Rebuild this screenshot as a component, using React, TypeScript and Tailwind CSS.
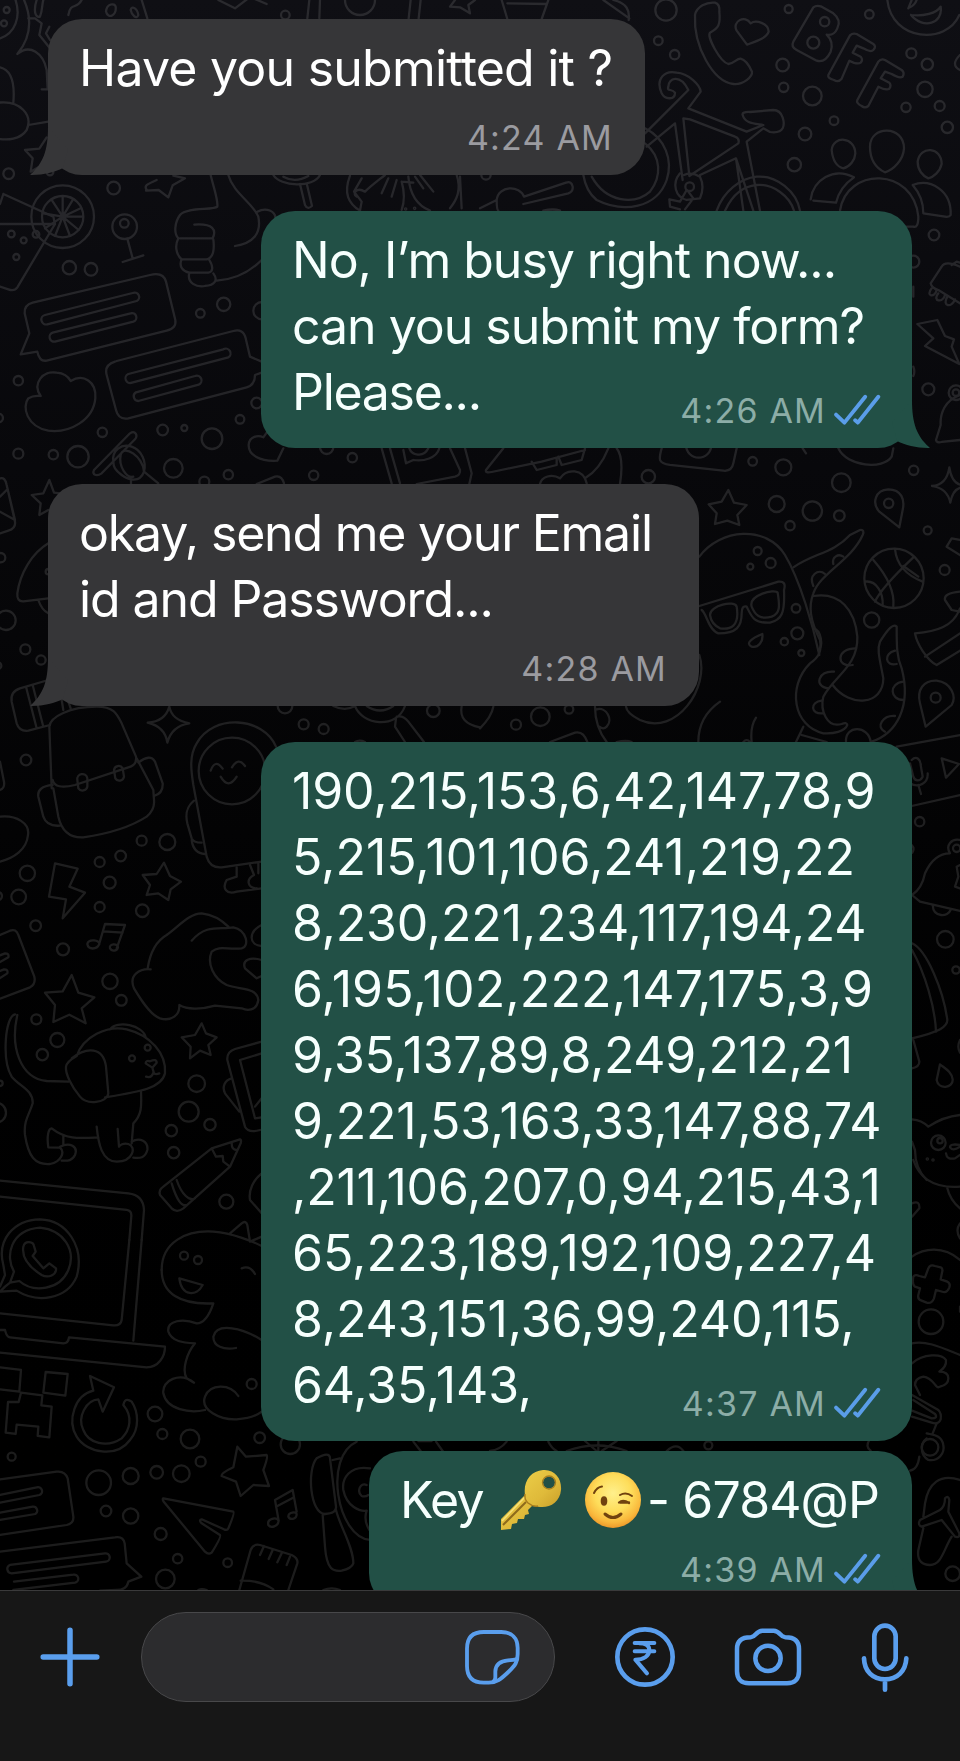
import type { ReactNode } from "react";

type Dot = [number, number, number];

/* ---------- wallpaper ---------- */

function Tile({ x, y, dots, paths }: { x: number; y: number; dots: Dot[]; paths: string[] }) {
  return (
    <g transform={`translate(${x} ${y}) scale(0.33333)`}>
      {dots.map(([cx, cy, r], i) => (
        <circle key={i} cx={cx} cy={cy} r={r} />
      ))}
      {paths.map((d, i) => (
        <path key={i} d={d} />
      ))}
    </g>
  );
}

const topLeftDots: Dot[] = [
  [20, 30, 9], [12, 70, 9], [856, 45, 13], [26, 521, 16], [341, 564, 19], [188, 650, 94], [188, 650, 62],
  [374, 680, 37], [373, 670, 13], [34, 702, 10], [71, 721, 9], [108, 703, 10], [49, 771, 9],
  [208, 803, 20], [273, 808, 19], [601, 940, 13], [671, 913, 20], [786, 932, 26], [55, 1142, 14], [-4, 1254, 13],
  [307, 1297, 14], [488, 1290, 16], [553, 1284, 9], [636, 1316, 31], [720, 1258, 13], [770, 1209, 16],
  [55, 1361, 15], [160, 1364, 14], [234, 1370, 32], [520, 1405, 28], [685, 1424, 14], [941, 1426, 14],
  [1057, 1373, 14], [980, 1342, 20], [1080, 0, 45], [1217, 627, 2], [1244, 625, 2], [613, 1445, 15], [150, 516, 10],
];
const topLeftPaths = [
  "M45 -5C65 50 45 100 0 115M70 -5C95 50 95 110 52 162C90 130 130 160 140 210L143 268H125",
  "M110 0C100 30 105 55 120 50C128 30 126 10 130 0M85 55H105L125 70L118 105L150 145M148 80L138 100L150 120",
  "M205 45C212 5 230 30 245 0M318 35C320 10 345 8 347 20C350 45 325 60 318 35M392 30C395 15 412 25 415 45C410 60 395 45 392 30M425 0L442 55",
  "M0 202C35 210 45 250 40 308M-5 308C60 300 100 345 80 390C60 420 20 420 0 417M85 375L145 365",
  "M140 412L118 446L75 450L98 475L92 515L115 502",
  "M655 0L705 25L745 -5M760 -5L800 12M928 0L922 55M960 0L958 55M1232 0L1226 55M1262 0L1256 55",
  "M1365 0L1350 20L1380 22L1410 40L1405 15L1425 0",
  "M440 570C430 555 445 552 470 540M438 572L476 570L505 592L518 556L555 535L520 527",
  "M188 650V590M188 650L218 600M188 650L242 625M188 650H248M188 650L236 690M188 650L210 708M188 650L165 708M188 650L135 685M188 650L130 640M188 650L155 600",
  "M10 582L160 650L165 672H0M165 672L52 862Q43 875 25 868L0 860M10 582L0 612",
  "M382 716L398 775M368 786L430 766",
  "M632 525C640 560 655 600 652 620C640 632 560 620 540 645C525 665 520 700 535 715C520 745 535 770 545 778C535 800 550 815 568 818C560 850 590 862 615 858C645 855 655 840 640 820M583 674C640 670 650 690 638 715H540M640 718C645 760 635 775 620 778H548M628 780C640 800 640 815 625 818L570 818M650 842C710 838 750 815 785 780M685 525C700 580 760 610 775 650C785 700 760 730 705 738M772 635C800 620 825 635 826 652",
  "M820 525C840 560 940 565 960 525M900 552L915 615Q922 630 936 618L920 550M850 530Q885 550 925 528",
  "M1050 527C1030 580 1045 610 1080 632M1085 535L1062 575L1085 605L1080 632M1095 575C1070 560 1055 580 1070 590M1155 525C1130 545 1110 560 1095 575M1165 535L1145 580M1190 540L1175 590M1205 545C1215 580 1212 610 1205 630M1205 545L1240 548M1225 530C1230 590 1260 620 1290 632M1245 530L1270 565M1260 525L1300 575M1370 525C1385 570 1370 600 1350 625M1380 530L1385 625",
  "M98 908L450 825Q490 815 498 845L526 960Q530 985 500 992L140 1082Q118 1085 112 1055L62 1063L88 1000L74 940Q72 915 98 908Z",
  "M135 945L398 879A12 12 0 0 1 410 903L142 973A14 14 0 0 1 135 945ZM158 998L392 940A12 12 0 0 1 400 965L165 1025A14 14 0 0 1 158 998Z",
  "M350 1083L700 993Q730 985 737 1015L750 1070L785 1085M345 1085Q312 1095 320 1125L348 1230Q355 1260 385 1255L740 1162Q765 1155 765 1125L785 1118",
  "M385 1122L670 1048A12 12 0 0 1 685 1072L396 1148A14 14 0 0 1 385 1122ZM408 1177L585 1128A12 12 0 0 1 596 1154L415 1203A14 14 0 0 1 408 1177Z",
  "M122 1188C95 1150 130 1110 170 1118C195 1120 205 1130 212 1143C250 1120 290 1145 286 1195C280 1260 210 1300 145 1292C80 1280 65 1220 85 1195Q100 1185 122 1188Z",
  "M850 1345L832 1382C780 1385 745 1365 746 1335C748 1308 775 1305 790 1312L800 1298",
  "M282 1410L390 1300C405 1290 415 1305 405 1318L305 1420C290 1430 275 1425 282 1410M340 1385C335 1350 365 1330 395 1340C425 1350 440 1385 432 1415C420 1450 385 1440 365 1425C345 1410 340 1400 340 1385M362 1365C370 1330 430 1370 432 1415M362 1365C355 1400 380 1435 400 1430M432 1415L475 1450M393 1440V1455",
  "M1145 1345L1175 1450M1170 1345L1200 1450M1210 1350L1218 1390L1240 1380C1270 1385 1310 1375 1318 1345M1228 1345C1235 1365 1270 1375 1285 1345M1350 1345L1380 1410Q1382 1425 1365 1430L1250 1452M1395 1345L1415 1420L1408 1452",
  "M770 1452L825 1430Q845 1425 852 1450",
];

const topRightDots: Dot[] = [
  [558, 30, 32], [535, 122, 13], [584, 164, 14], [908, 195, 19], [911, 262, 14], [997, 288, 28], [926, 27, 12],
  [1168, 43, 13], [1294, 160, 15], [1342, 193, 17], [1335, 268, 23], [1278, 322, 14], [1379, 318, 15],
  [1062, 362, 13], [975, 402, 19], [1402, 382, 17], [943, 494, 20], [1034, 65, 14], [1000, 128, 18], [629, 560, 13],
  [1362, 705, 16], [1345, 1168, 18], [1428, 1178, 10], [1428, 1178, 22], [505, 1430, 20], [818, 1384, 13],
  [910, 1402, 24], [1301, 1411, 14], [1300, 785, 18], [656, 1335, 38], [18, 525, 14],
];
const topRightPaths = [
  "M65 0L82 57M82 10L200 12M205 0L185 57M370 0L448 55M400 0C440 10 450 30 446 60",
  "M645 45C650 20 680 5 705 8Q720 12 718 35C722 75 715 85 690 98C680 110 720 185 745 192C765 190 770 175 782 176Q800 180 816 215C818 230 790 255 760 252C700 245 640 140 645 45Z",
  "M801 134L770 92C755 65 795 42 812 70C828 58 865 70 866 95C860 115 825 125 801 134Z",
  "M940 125L1000 22Q1010 14 1025 20L1060 40Q1085 60 1072 85Q1062 108 1040 104Q1062 125 1052 155Q1035 190 1010 182L950 150Q932 140 940 125Z",
  "M1045 225L1110 106Q1118 98 1130 102L1180 132Q1190 140 1180 150Q1172 158 1150 145L1130 137L1118 158L1142 170Q1150 180 1142 188Q1132 195 1108 182L1085 236Q1075 248 1062 240Q1042 235 1045 225Z",
  "M1132 300L1195 185Q1203 175 1215 180L1265 210Q1275 218 1268 230Q1258 236 1235 222L1215 215L1202 235L1228 248Q1235 256 1228 266Q1218 272 1195 260L1165 318Q1155 326 1145 318Q1128 310 1132 300Z",
  "M1222 0C1235 125 1400 135 1438 45M1293 45C1330 50 1370 40 1382 20C1390 70 1330 90 1293 45M1295 0L1285 25M1310 0Q1305 15 1290 22M1440 165C1420 185 1420 200 1440 210",
  "M495 400L585 310L625 270C600 220 565 235 565 260C560 275 575 265 585 278C585 300 555 300 545 280C525 235 555 210 590 218C625 220 660 255 662 275L625 325M625 325L800 395L850 375C820 370 795 370 788 345Q785 335 810 336L880 330C910 330 915 370 908 385Q900 400 870 396L850 385L800 425L840 632M500 440L585 370L608 540M610 355L628 528L775 430Q780 415 765 410L630 358ZM660 525L768 475L790 632M768 475L820 632",
  "M495 385C555 415 580 480 560 540C530 625 430 640 350 600C325 580 315 555 310 525M495 430C545 470 545 530 510 575C465 615 380 610 335 530",
  "M710 632C730 575 780 535 830 530C890 525 950 575 960 632M735 632C760 580 790 560 830 555C880 550 930 590 942 632",
  "M600 520C575 550 585 590 620 600L660 595Q675 560 660 530Q635 515 612 525M620 570L600 605L568 598L570 620L600 628M625 575L640 595L615 628",
  "M0 625L50 600C55 555 120 555 132 590L258 548Q275 542 278 560Q280 575 265 580L130 612M50 600Q50 632 55 632M190 632Q220 625 240 632",
  "M1055 450C1060 405 1125 410 1126 460C1125 480 1110 500 1090 505C1070 500 1058 480 1055 450ZM1170 440C1170 375 1272 375 1272 445C1270 480 1240 510 1215 517C1190 505 1170 480 1170 440ZM1313 485C1320 435 1385 440 1385 492C1380 515 1360 532 1345 535C1328 528 1313 510 1313 485Z",
  "M992 598C1000 540 1060 500 1122 532C1095 550 1075 580 1068 608L1000 602M1080 632C1100 500 1300 500 1315 650Q1315 685 1300 680H1280M1298 555C1350 535 1415 570 1412 645Q1408 652 1395 650L1330 640C1330 610 1320 580 1298 555",
  "M1440 800Q1395 780 1385 800L1352 850Q1355 865 1375 870L1440 910M1415 795L1430 785L1440 788M1355 865C1335 890 1365 895 1370 870M1375 880C1355 905 1390 910 1395 885M1402 890C1385 920 1415 925 1425 898M1300 860V890",
  "M1312 972L1372 960L1395 1008L1422 1018L1415 1040L1438 1092L1335 1038L1360 1015L1312 972Z",
  "M1440 1185C1395 1200 1380 1240 1382 1275L1368 1320Q1370 1330 1385 1326L1440 1320M1300 1100Q1306 1115 1300 1128",
  "M70 1345L18 1410Q15 1420 35 1416L185 1385L315 1350M155 1385L170 1410L230 1395V1375M235 1370L245 1395L305 1380L315 1345M410 1345C430 1370 425 1420 420 1452M180 1452C185 1430 215 1420 240 1435C260 1405 310 1405 320 1450M385 1345C365 1395 340 1420 315 1435",
  "M545 1345C535 1380 535 1390 570 1395L730 1412Q755 1415 760 1390L770 1345M1075 1345C1100 1400 1210 1410 1235 1370L1240 1345M968 1345L978 1360",
];

const midLeftDots: Dot[] = [
  [2, 293, 14], [18, 481, 29], [76, 568, 15], [123, 600, 14], [-6, 617, 10], [78, 900, 16], [145, 335, 8],
  [425, 1142, 15], [502, 1146, 24], [362, 1188, 16], [299, 1206, 15], [82, 1240, 23], [56, 1311, 22], [-6, 1308, 12],
  [329, 1268, 18], [299, 1341, 15], [427, 1352, 19], [107, 1397, 16], [696, 933, 100], [911, 793, 15], [971, 807, 15],
  [855, 738, 22], [1300, 752, 19],
];
const midLeftPaths = [
  "M0 55Q15 50 20 75L45 185Q48 205 25 212L0 220M20 90L0 110M20 75L45 180L0 155",
  "M180 100L162 98L148 60L130 100L95 105L122 130L118 165L145 150",
  "M145 250C95 280 60 340 52 400Q50 425 70 424L145 415M115 420Q125 450 145 460",
  "M145 660L60 685Q30 695 35 725L50 790Q58 815 85 812L150 795M78 680L110 805M98 675L130 800M185 720L190 750M205 725L212 745",
  "M155 985L148 800C150 770 210 740 290 740C340 740 350 760 365 790L408 890Q412 915 385 922L225 975Q165 990 158 960M160 985L175 1070Q190 1135 250 1132Q370 1115 440 1070Q465 1050 462 1020L460 990L410 895",
  "M158 975Q110 980 115 1010L130 1070Q140 1100 180 1097M415 908Q450 880 465 905L488 970Q490 1000 462 1008",
  "M232 960A15 15 0 0 1 262 955L262 980A15 15 0 0 1 235 985ZM342 930A14 14 0 0 1 368 925L372 950A14 14 0 0 1 346 955Z",
  "M443 788Q495 785 508 740Q515 780 568 790Q515 798 502 848Q495 800 443 788Z",
  "M828 860C790 770 640 760 590 850C565 890 575 940 580 975L620 1190Q630 1225 665 1222L785 1205",
  "M582 1022C560 1040 555 1060 562 1090L575 1135Q580 1148 605 1148M575 1140Q580 1180 615 1182M632 932Q645 895 668 926M696 922Q715 890 735 918M662 950Q685 990 710 950",
  "M710 1222V1250L680 1260C665 1285 680 1305 710 1295L785 1285M750 1215L762 1245C735 1260 745 1285 770 1285M775 1210V1240",
  "M165 1210L233 1226L208 1280L255 1298L188 1375L198 1318L147 1310Z",
  "M492 1208L510 1248L543 1265L512 1288L505 1320L475 1300L440 1305L450 1275L428 1245L470 1242Z",
  "M0 905L12 965Q15 985 0 990M0 1070C50 1065 90 1090 84 1125C80 1170 40 1195 0 1205",
  "M1000 738Q1035 755 1065 738C1085 795 1190 810 1215 738M1100 738Q1140 765 1180 738M1190 770Q1210 765 1225 785L1272 846M1188 775L1185 800L1215 846M1385 738Q1375 790 1440 802M1065 846Q1078 838 1095 846",
];

const midRightDots: Dot[] = [
  [890, 132, 24], [997, 153, 29], [1084, 68, 28], [1078, 167, 16], [930, 197, 14], [833, 273, 12], [872, 309, 15],
  [811, 320, 9], [1226, 130, 14], [1343, 211, 12], [1394, 330, 15], [1242, 355, 89], [948, 445, 13], [952, 520, 18],
  [913, 545, 11], [964, 579, 9], [1175, 480, 23], [1367, 713, 15], [181, 770, 28], [108, 794, 15], [267, 748, 13],
];
const midRightPaths = [
  "M745 90L762 128L800 135L772 165L778 195L742 182L705 192L710 160L686 133L725 125Z",
  "M1258 202L1198 155C1175 130 1185 90 1225 88C1265 88 1275 120 1268 150Z",
  "M1337 800L1320 730C1310 690 1330 660 1370 662C1415 668 1430 710 1415 735Z",
  "M1356 78Q1400 75 1408 22Q1415 70 1445 75M1445 82Q1418 88 1411 128Q1402 85 1356 78",
  "M1180 300C1215 340 1245 390 1240 440M1245 267C1250 320 1290 350 1328 365M1300 292C1260 330 1200 390 1185 425M1155 365C1190 360 1210 400 1208 435M1270 318L1315 350",
  "M658 290C720 205 860 195 915 285C960 360 1000 500 1018 585M658 438L895 365Q920 362 912 390C915 460 905 480 870 488C820 490 815 470 800 440Q785 435 785 460C785 500 770 520 715 520C685 510 680 460 665 450M690 465C690 435 765 420 770 440C780 500 750 510 720 505C700 495 692 480 690 465M815 440C805 405 885 385 893 398C900 440 900 460 875 470C840 480 825 465 815 440Z",
  "M847 522C850 545 835 565 815 560C795 550 815 535 847 522Z",
  "M940 322C1000 280 1060 280 1110 225L1140 210Q1155 208 1148 225C1115 300 1020 340 1000 400C985 440 990 480 1020 540C1025 570 1020 590 990 610C920 680 940 800 1030 820C1060 822 1095 815 1102 795Q1100 785 1085 792C1040 805 1020 750 1030 710C1060 650 1135 620 1132 530C1125 450 1080 395 1000 408",
  "M1058 675C1110 745 1210 735 1210 655C1200 600 1190 570 1200 545C1225 505 1240 490 1250 500C1250 560 1250 590 1265 625C1295 740 1250 820 1175 845",
  "M1000 378C985 345 1015 325 1035 342M1060 312C1055 290 1075 280 1090 290M1000 505C1025 510 1030 560 1015 570M1118 615C1070 625 1065 565 1128 565M1045 685C1000 680 1015 630 1062 635M1030 760C990 765 990 725 1025 722M1250 612C1215 620 1210 580 1245 572M1270 720C1230 720 1225 670 1270 665M1215 815C1185 800 1210 765 1245 768M1098 845C1095 795 1165 795 1172 845",
  "M658 585C690 680 590 830 480 780Q440 760 438 740M345 740Q345 800 380 846M350 748C380 740 400 780 380 800Q370 810 358 800M655 846Q655 770 720 725M815 846Q810 800 828 773M790 846Q800 835 810 846M970 800L948 846M965 825L1040 846",
  "M1440 240L1415 235L1400 260L1440 285M1440 395Q1390 400 1395 420L1415 450L1440 455M1440 445C1420 500 1370 515 1305 520C1310 550 1340 600 1370 615L1440 572M1335 590L1440 520",
  "M0 805Q35 770 40 740M210 846L285 818Q310 812 322 846M410 846Q440 840 455 846",
];

const lowLeftDots: Dot[] = [
  [189, 148, 18], [330, 244, 23], [364, 301, 16], [109, 358, 15], [172, 420, 21], [127, 464, 17], [396, 475, 9],
  [443, 443, 9], [590, 551, 25], [566, 635, 30], [630, 674, 17], [514, 692, 17], [521, 758, 17], [679, 905, 21],
  [0, 550, 8], [-12, 638, 30],
];
const lowLeftPaths = [
  "M0 105L30 92Q48 85 55 105L103 230Q108 252 90 262L0 296M0 166L15 160Q28 160 25 172L0 186M0 213L12 208Q25 208 22 220L0 234",
  "M262 132C265 115 300 120 298 132C290 150 265 150 262 132ZM298 130L315 72L375 75L350 145M310 94L368 98M330 145C325 130 355 130 354 142C350 155 335 155 330 145Z",
  "M215 225L235 278L283 292L245 325L257 370L208 344L160 366L165 315L135 278L188 274Z",
  "M605 370L618 400L650 412L625 435L632 465L600 452L570 475L572 440L545 412L585 405Z",
  "M575 122C620 70 660 90 700 82C740 90 750 140 725 145C680 150 660 135 635 155C620 190 640 235 680 255C720 270 770 260 775 300C770 335 740 332 725 325L645 317C600 330 560 328 538 315C540 345 515 365 480 355C450 345 420 295 402 265C385 225 420 205 452 208M443 205C450 160 465 125 500 105C540 75 570 40 605 40Q650 45 685 80",
  "M785 75C745 95 745 135 785 138M785 180C750 170 725 180 735 205L770 235L785 228",
  "M45 343C15 350 5 480 35 530C60 560 100 570 98 610C90 640 70 660 75 705C85 770 105 795 150 792C185 785 195 755 180 743L145 742C140 710 145 685 155 685C200 720 240 715 295 712M52 345C30 440 60 535 140 543L205 545M290 680C295 730 305 785 350 785C400 785 410 740 385 732C370 728 360 735 357 740L353 687M423 575C425 620 425 645 400 670L395 730M190 708V735M180 740C210 725 235 740 225 765C215 785 200 782 185 782M395 725C420 710 445 725 442 750C435 775 420 775 400 773",
  "M230 468C250 410 320 375 380 388C450 405 500 460 495 520C485 565 420 575 315 592M215 475C260 440 310 440 318 500L325 580C320 610 260 615 240 590C215 560 195 520 198 500Q200 485 230 468M330 388C350 360 430 375 437 412M437 490Q437 480 450 484Q470 475 470 488L457 503ZM457 503L462 520M438 530Q455 535 460 518Q465 525 478 520",
  "M785 425L705 447Q680 455 682 480L735 680Q745 700 780 690M785 460L720 480L765 655L785 652M695 535C675 540 665 560 675 580L718 635M785 595L765 620",
  "M480 885Q475 870 490 860L635 745L720 718Q725 720 722 730L690 800L550 925Q530 940 515 925ZM635 745L648 770L668 768L670 785L690 800M695 730Q695 750 710 750M515 850C530 900 545 920 560 915M530 840C545 885 570 905 585 895",
  "M785 820C760 840 745 870 750 900L785 940M690 1000L725 970Q738 960 742 975L750 1025L785 1010M485 1110C485 1025 560 990 640 995C700 1000 760 1025 785 1038",
  "M0 842L385 880Q430 885 432 930L425 1020M0 890L380 930Q395 932 394 948L388 1020",
];

const bottomLeftDots: Dot[] = [
  [465, 522, 22], [487, 582, 15], [570, 597, 28], [602, 665, 15], [544, 701, 25], [470, 697, 19], [392, 708, 24],
  [296, 728, 37], [318, 813, 16], [392, 828, 23], [482, 882, 18], [533, 956, 14], [496, 1017, 28], [683, 968, 13],
  [779, 593, 16], [871, 613, 29], [755, 432, 15], [35, 650, 12], [552, 47, 12], [594, 60, 12],
];
const bottomLeftPaths = [
  "M0 155L15 140L30 128M0 155L50 152C110 190 200 180 230 110C255 20 200 -60 120 -62C40 -60 -10 0 10 75L15 105L0 140M30 128L42 95C15 50 30 -30 120 -37C190 -30 230 30 205 90C180 150 100 160 58 123L30 128",
  "M70 20C75 0 100 5 102 18L107 35L98 48L130 85L148 70L168 85C170 105 145 115 125 105C85 80 65 50 70 20Z",
  "M425 0L400 302M388 0L365 240Q362 258 340 256L0 220M0 270H15Q20 292 30 292L190 310Q205 310 207 292L495 320C495 350 475 382 440 382L0 338",
  "M0 382L63 390L58 455L0 448M137 396L203 402L196 467L130 458ZM63 458L127 466L124 496L155 500L148 592L113 588L115 560L50 554L47 582L17 578L24 486H56Z",
  "M342 442L270 408L280 452C225 465 200 540 230 590C260 640 350 655 390 600C420 565 415 515 395 485Q375 470 370 495C400 530 390 570 365 595C320 625 265 610 250 570C230 530 260 480 295 478L308 515Z",
  "M485 90C485 160 540 195 640 190C630 220 615 250 590 250C550 235 500 240 505 275C515 305 550 308 585 310C560 340 545 390 560 415L582 428C540 395 485 420 490 460C500 510 570 520 615 510M538 115L608 135C590 170 545 170 538 115ZM725 85Q750 75 765 102M785 300C730 265 650 245 640 290C640 320 670 330 708 324M715 468C690 430 630 430 615 470C600 510 660 540 710 538Q760 535 785 515",
  "M712 620L738 650L800 645Q805 650 790 690L807 738L760 735L722 768L708 725L665 708Q662 700 700 682Z",
  "M490 775L700 815Q705 818 685 865Q682 872 672 868L605 838Q595 840 605 850L660 885Q665 890 635 938Q625 945 615 935L495 790Q485 778 490 775Z",
  "M805 855C800 835 830 830 836 842C835 860 812 865 805 855ZM836 842L825 780L878 750L890 815M828 800L882 772M865 830C865 815 888 815 890 822C890 840 868 840 865 830Z",
  "M0 718L170 695Q195 692 203 715L220 830Q222 850 200 855L0 885M0 765L110 742A12 12 0 0 1 118 765L0 788M0 818L98 800A12 12 0 0 1 106 822L0 840",
  "M0 935L345 892Q370 888 374 910L380 970L424 1010L385 1025Q380 1050 350 1050L300 1052M30 975L315 940A11 11 0 0 1 318 965L35 1000A13 13 0 0 1 30 975ZM42 1025L220 1004A11 11 0 0 1 225 1028L40 1050M0 1035",
  "M718 1050L752 930Q760 910 780 915L875 945Q895 955 892 970L865 1050M722 1022Q780 1020 820 1048M792 918L780 945M818 930L806 957M845 940L832 967M870 950L860 975",
  "M975 822C930 820 920 690 950 655C975 640 990 640 990 655L1008 800Q1010 820 975 822L968 825L975 920C980 990 1000 995 1025 992Q1055 985 1060 970C1060 920 1020 860 1008 810M1110 900C1010 890 970 650 1070 605M1110 685C1050 675 1025 715 1030 750C1040 800 1080 815 1100 812Q1090 840 1108 870M1020 655L998 660M1100 735C1080 725 1070 755 1085 768Q1095 772 1105 765",
  "M595 1050Q605 1045 620 1050M970 1050Q995 1040 1020 1050",
];

const rightUpperDots: Dot[] = [
  [179, 275, 14], [256, 628, 25], [288, 720, 11], [290, 355, 11], [235, 1238, 22], [240, 1232, 8], [202, 1287, 2], [219, 1290, 2],
];
const rightUpperPaths = [
  "M110 50L300 15M155 228L300 195M155 90C170 75 182 90 182 105L188 140C180 155 165 155 160 140L150 100M150 160C175 175 205 160 203 130M175 165L183 192M245 85L297 102L258 143Z",
  "M155 345Q165 355 157 368M156 495C180 480 190 455 195 430C215 385 240 370 270 370C255 345 275 325 300 330M156 495L180 515L300 543M218 525C220 565 265 560 272 540M300 405L290 410L295 440L285 470L300 475",
  "M156 640C200 660 250 780 262 870C262 890 240 905 156 925M156 660C195 730 225 830 228 905M160 930L178 995Q178 1010 156 1015",
  "M240 1003L230 1050C235 1080 280 1075 278 1048C275 1025 255 1015 240 1003ZM156 1168Q185 1170 205 1190Q250 1160 300 1155M156 1235L165 1260C165 1300 180 1330 200 1350M300 1245Q270 1240 270 1252Q280 1265 300 1250M258 1270Q260 1290 285 1285L300 1275M300 930Q290 950 300 968",
];

const rightLowerDots: Dot[] = [[213, 485, 37], [210, 862, 25], [278, 1241, 22]];
const rightLowerPaths = [
  "M160 0C180 60 230 85 300 80M262 85Q270 120 300 145M156 130Q180 120 178 145L156 170M300 190Q285 210 300 235",
  "M156 290C190 265 250 255 300 300M156 550C200 540 250 565 300 585",
  "M205 325Q210 312 225 318L242 322Q250 326 246 338L242 358L262 365Q272 370 268 382Q262 398 250 396L228 390L222 415Q215 432 200 428L185 422Q172 418 175 405L180 385L165 380Q156 375 160 350Q165 342 178 348L195 352Z",
  "M156 610C190 580 245 580 258 600Q260 620 238 635Q265 635 265 655Q265 675 240 680C225 690 225 655 190 650Q165 655 165 675L180 705M156 705L235 750Q245 760 242 778Q235 795 215 788L156 770M160 720L225 762Q235 775 215 775L156 752",
  "M200 835C180 850 180 885 205 900C235 905 255 880 250 855C245 825 220 825 200 820M230 790L218 820M178 890C175 915 165 930 150 932M28 840Q15 860 32 872",
  "M300 960C240 940 205 970 195 1030L190 1070M190 1105L175 1170C170 1205 190 1215 210 1215C245 1215 250 1170 275 1130M180 1080L240 1050Q255 1040 255 1015Q265 1005 268 1020L265 1055L298 1120Q300 1135 285 1130L245 1080L185 1100Q172 1095 180 1080Z",
  "M300 440V455",
];

const gapDots: Dot[] = [[925, 16, 12]];
const gapPaths = [
  "M40 5L62 33M108 5L128 33M55 3H95M320 5Q300 30 270 33M445 5Q455 25 470 33M500 33Q590 0 680 33M555 3L590 33M595 0L595 33M650 3L605 33M800 33Q830 5 850 33",
];

function Wallpaper() {
  return (
    <svg
      className="absolute inset-0 h-full w-full opacity-11"
      viewBox="0 0 960 1590"
      fill="none"
      stroke="#ffffff"
      strokeWidth="6.800"
      strokeLinecap="round"
      strokeLinejoin="round"
      aria-hidden="true"
    >
      <Tile x={0} y={0} dots={topLeftDots} paths={topLeftPaths} />
      <Tile x={480} y={0} dots={topRightDots} paths={topRightPaths} />
      <Tile x={0} y={460} dots={midLeftDots} paths={midLeftPaths} />
      <Tile x={480} y={460} dots={midRightDots} paths={midRightPaths} />
      <Tile x={0} y={900} dots={lowLeftDots} paths={lowLeftPaths} />
      <Tile x={0} y={1240} dots={bottomLeftDots} paths={bottomLeftPaths} />
      <Tile x={860} y={730} dots={rightUpperDots} paths={rightUpperPaths} />
      <Tile x={860} y={1160} dots={rightLowerDots} paths={rightLowerPaths} />
      <Tile x={400} y={1440} dots={gapDots} paths={gapPaths} />
    </svg>
  );
}

/* ---------- messages ---------- */

function Ticks() {
  return (
    <svg className="-mt-0.5 h-8 w-12" viewBox="1060 1180 143 95" fill="none" stroke="#5a9de9" strokeWidth="11.500" strokeLinecap="round" strokeLinejoin="round">
      <path d="M1069 1241L1094 1265L1156 1188" />
      <path d="M1126 1258L1134 1265L1195 1188" />
    </svg>
  );
}

function Received({ time, className, children }: { time: string; className: string; children: ReactNode }) {
  return (
    <div className={`relative self-start rounded-[34px] bg-[#363638] pt-4 pb-[17px] pl-[31px] text-white ${className}`}>
      <svg className="absolute bottom-0 -left-[18px] h-14 w-10" viewBox="0 0 40 56" fill="#363638">
        <path d="M18 8C18 32 13 44 1 55C0 56 0 56 2 56C14 56 25 53 33 49L38 30L18 8Z" />
      </svg>
      <div className="relative text-[50px] leading-[66px] whitespace-nowrap">{children}</div>
      <div className="relative mt-4 pr-8 text-right text-[34px] leading-[41px] tracking-[1.2px] text-[#9b9ba0]">{time}</div>
    </div>
  );
}

function Sent({
  time,
  className,
  inline = false,
  tail = false,
  children,
}: {
  time: string;
  className: string;
  inline?: boolean;
  tail?: boolean;
  children: ReactNode;
}) {
  return (
    <div className={`relative self-end rounded-[34px] bg-[#225046] pt-4 pb-[17px] pl-[31px] text-[#f6fffd] ${className}`}>
      {tail && (
        <svg className="absolute -right-[18px] bottom-0 h-14 w-10" viewBox="0 0 40 56" fill="#225046">
          <path d="M22 8C22 32 27 44 39 55C40 56 40 56 38 56C26 56 15 53 7 49L2 30L22 8Z" />
        </svg>
      )}
      <div className="relative text-[50px] leading-[66px] whitespace-nowrap">{children}</div>
      <div className={`relative flex h-[41px] items-center justify-end gap-[7px] pr-[31px] ${inline ? "-mt-[35px]" : "mt-4"}`}>
        <span className="text-[34px] leading-[41px] tracking-[1.2px] text-[#8cada7]">{time}</span>
        <Ticks />
      </div>
    </div>
  );
}

function KeyEmoji() {
  return (
    <svg className="ml-[17px] h-[62px] w-[62px] shrink-0" viewBox="0 0 62 62" role="img" aria-label="key">
      <defs>
        <linearGradient id="gold" x1="0" y1="0" x2="1" y2="1">
          <stop offset="0" stopColor="#f3d84f" />
          <stop offset="0.55" stopColor="#dfba3a" />
          <stop offset="1" stopColor="#b98a1d" />
        </linearGradient>
      </defs>
      <path
        fillRule="evenodd"
        fill="url(#gold)"
        d="M43 1C55 0 62 10 61 21C60 33 50 39 40 38L32 37L28 41L29 45L25 46L24 50L18 50L17 54L12 55L11 60L1 61V50L25 26C23 12 31 2 43 1ZM49 7.500A6 6 0 1 0 49 19.500A6 6 0 1 0 49 7.500Z"
      />
      <path d="M3 56L26 33" stroke="#8d6a1c" strokeWidth="2" />
      <path d="M2 52L25 28" stroke="#f8e27a" strokeWidth="1.500" />
      <path d="M25 25Q24 30 28 34Q33 38 38 37" stroke="#a67b1d" strokeWidth="1.500" fill="none" />
      <circle cx="49" cy="13.500" r="6.500" fill="none" stroke="#a67f20" strokeWidth="1.300" />
    </svg>
  );
}

function WinkEmoji() {
  return (
    <svg className="ml-[23px] h-[58px] w-14 shrink-0" viewBox="0 0 56 58" role="img" aria-label="winking face">
      <defs>
        <radialGradient id="face" cx="0.5" cy="0.38" r="0.65">
          <stop offset="0" stopColor="#fff08c" />
          <stop offset="0.5" stopColor="#fedd5a" />
          <stop offset="0.8" stopColor="#f9b83c" />
          <stop offset="1" stopColor="#ea8f24" />
        </radialGradient>
      </defs>
      <circle cx="28" cy="29" r="28" fill="url(#face)" />
      <ellipse cx="19" cy="30" rx="3.300" ry="4.800" fill="#70420f" />
      <g fill="none" stroke="#70420f" strokeLinecap="round">
        <path d="M9 22Q12 16 17 15.500" strokeWidth="2" />
        <path d="M35 24Q41 20.500 47 25" strokeWidth="2" />
        <path d="M34 31.500Q38 28 44 32M35 31.500H44" strokeWidth="2.300" />
        <path d="M20 43Q28 50 36 43" strokeWidth="3" />
      </g>
    </svg>
  );
}

/* ---------- composer ---------- */

function Composer() {
  return (
    <footer className="h-[171px] border-t border-[#3a3a3b] bg-[#171717] pt-[21px] text-[#5a9eed]">
      <div className="flex h-[90px] items-center pl-10">
        <svg className="h-[60px] w-[60px] shrink-0" viewBox="0 0 60 60" fill="none" stroke="currentColor" strokeWidth="5.500" strokeLinecap="round">
          <path d="M30 3.200V56.800M3.200 30H56.800" />
        </svg>
        <div className="ml-[41px] flex h-[90px] w-[414px] shrink-0 items-center justify-end rounded-full border border-[#48484a] bg-[#2c2c2e] pr-8">
          <svg className="h-[70px] w-[60px]" viewBox="66 126 180 210" fill="none" stroke="currentColor" strokeWidth="11.500" strokeLinejoin="round">
            <path d="M131 156H184C215 156 233 174 233 204V222C233 246 226 256 205 276C182 298 170 308 146 308H131C97 308 81 291 81 258V206C81 173 98 156 131 156Z" />
            <path d="M233 234C229 241 218 240 204 241C178 243 167 255 166 274V292C166 301 163 305 157 307" />
          </svg>
        </div>
        <svg className="ml-[60px] h-[70px] w-[60px] shrink-0" viewBox="525 126 180 210" fill="none" stroke="currentColor" strokeLinecap="round" strokeLinejoin="round">
          <circle cx="615" cy="231" r="83" strokeWidth="14" />
          <path d="M584 189H643M584 214H643M598 190C618 190 628 198 628 211C628 228 611 239 586 239L621 280" strokeWidth="12" />
        </svg>
        <svg className="ml-[59px] h-[70px] w-[68px] shrink-0" viewBox="882 126 204 210" fill="none" stroke="currentColor" strokeWidth="13.500" strokeLinejoin="round">
          <path d="M932 172C948 171 947 153 967 152H1001C1021 153 1020 171 1036 172C1063 172 1077 184 1077 207V274C1077 297 1064 310 1041 310H927C904 310 891 297 891 274V207C891 184 905 172 932 172Z" />
          <circle cx="984" cy="235" r="38" />
        </svg>
        <svg className="ml-[59px] h-[72px] w-12 shrink-0" viewBox="1263 125 144 216" fill="none" stroke="currentColor" strokeWidth="14" strokeLinecap="round">
          <rect x="1303" y="139" width="64" height="130" rx="32" />
          <path d="M1272 237C1273 275 1298 300 1335 300C1372 300 1397 275 1399 237M1335 300V331" />
        </svg>
      </div>
    </footer>
  );
}

export default function App() {
  return (
    <div className="flex h-[1761px] w-[960px] flex-col overflow-hidden bg-black font-['Inter',sans-serif]">
      <main className="relative h-[1590px] shrink-0 overflow-hidden bg-linear-to-b from-[#0f0f14] via-[#060608] via-40% to-black">
        <Wallpaper />
        <div className="relative flex flex-col pt-[19px] pr-12 pl-12">
          <Received time="4:24 AM" className="w-[597px]">
            <p className="tracking-[-0.77px]">Have you submitted it ?</p>
          </Received>
          <Sent time="4:26 AM" className="mt-9 w-[651px]" inline tail>
            <p className="tracking-[-1.02px]">No, I’m busy right now...</p>
            <p className="tracking-[-1.02px]">can you submit my form?</p>
            <p className="tracking-[-1.3px]">Please...</p>
          </Sent>
          <Received time="4:28 AM" className="mt-9 w-[651px]">
            <p className="tracking-[-1.2px]">okay, send me your Email</p>
            <p className="tracking-[-1.1px]">id and Password...</p>
          </Received>
          <Sent time="4:37 AM" className="mt-9 w-[651px]" inline>
            <p className="tracking-[-0.15px]">190,215,153,6,42,147,78,9</p>
            <p>5,215,101,106,241,219,22</p>
            <p className="tracking-[-0.2px]">8,230,221,234,117,194,24</p>
            <p className="tracking-[0.12px]">6,195,102,222,147,175,3,9</p>
            <p className="tracking-[-0.4px]">9,35,137,89,8,249,212,21</p>
            <p className="tracking-[-0.2px]">9,221,53,163,33,147,88,74</p>
            <p className="tracking-[-0.23px]">,211,106,207,0,94,215,43,1</p>
            <p>65,223,189,192,109,227,4</p>
            <p className="tracking-[-0.15px]">8,243,151,36,99,240,115,</p>
            <p className="tracking-[-0.15px]">64,35,143,</p>
          </Sent>
          <Sent time="4:39 AM" className="mt-2.5 w-[543px]" tail>
            <div className="flex h-[66px] items-center">
              <span className="tracking-[-1.6px]">Key</span>
              <KeyEmoji />
              <WinkEmoji />
              <span className="ml-1.5 tracking-[-0.9px]">- 6784@P</span>
            </div>
          </Sent>
        </div>
      </main>
      <Composer />
    </div>
  );
}
